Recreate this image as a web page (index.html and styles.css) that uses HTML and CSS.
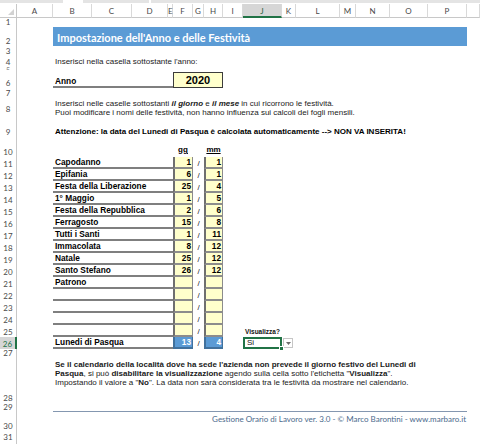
FILE: index.html
```html
<!DOCTYPE html>
<html lang="it">
<head>
<meta charset="utf-8">
<title>Impostazione dell'Anno e delle Festività</title>
<link rel="stylesheet" href="styles.css">
</head>
<body>
<div class="sheet">
  <div class="strip"></div>
  <div class="corner"><svg width="6" height="6" viewBox="0 0 6 6"><polygon points="6,0 6,6 0,6" fill="#d2d2d2"/></svg></div>
  <div class="ch">A</div><div class="ch">B</div><div class="ch">C</div><div class="ch">D</div><div class="ch">E</div><div class="ch">F</div><div class="ch">G</div><div class="ch">H</div><div class="ch">I</div><div class="ch sel">J</div><div class="ch">K</div><div class="ch">L</div><div class="ch">M</div><div class="ch">N</div><div class="ch">O</div><div class="ch">P</div><div class="ch"></div>

  <div class="row"><div class="rh">1</div></div>
  <div class="row"><div class="rh">2</div><div class="title">Impostazione dell'Anno e delle Festività</div></div>
  <div class="row"><div class="rh">3</div></div>
  <div class="row"><div class="rh">4</div><div class="txt">Inserisci nella casella sottostante l'anno:</div></div>
  <div class="row"><div class="rh rh-clip">5</div></div>
  <div class="row"><div class="rh">6</div><div class="name">Anno</div><div class="year">2020</div></div>
  <div class="row"><div class="rh">7</div></div>
  <div class="row"><div class="rh">8</div><div class="para">Inserisci nelle caselle sottostanti <b><i>il giorno</i></b> e <b><i>il mese</i></b> in cui ricorrono le festività.<br>Puoi modificare i nomi delle festività, non hanno influenza sui calcoli dei fogli mensili.</div></div>
  <div class="row"><div class="rh">9</div><div class="txt warn">Attenzione: la data del Lunedi di Pasqua è calcolata automaticamente --&gt; NON VA INSERITA!</div></div>
  <div class="row"><div class="rh">10</div><div class="colh gg-col">gg</div><div class="colh mm-col">mm</div></div>

  <div class="row"><div class="rh">11</div><div class="name">Capodanno</div><div class="num gg">1</div><div class="sl">/</div><div class="num mm">1</div></div>
  <div class="row"><div class="rh">12</div><div class="name">Epifania</div><div class="num gg">6</div><div class="sl">/</div><div class="num mm">1</div></div>
  <div class="row"><div class="rh">13</div><div class="name">Festa della Liberazione</div><div class="num gg">25</div><div class="sl">/</div><div class="num mm">4</div></div>
  <div class="row"><div class="rh">14</div><div class="name">1° Maggio</div><div class="num gg">1</div><div class="sl">/</div><div class="num mm">5</div></div>
  <div class="row"><div class="rh">15</div><div class="name">Festa della Repubblica</div><div class="num gg">2</div><div class="sl">/</div><div class="num mm">6</div></div>
  <div class="row"><div class="rh">16</div><div class="name">Ferragosto</div><div class="num gg">15</div><div class="sl">/</div><div class="num mm">8</div></div>
  <div class="row"><div class="rh">17</div><div class="name">Tutti i Santi</div><div class="num gg">1</div><div class="sl">/</div><div class="num mm">11</div></div>
  <div class="row"><div class="rh">18</div><div class="name">Immacolata</div><div class="num gg">8</div><div class="sl">/</div><div class="num mm">12</div></div>
  <div class="row"><div class="rh">19</div><div class="name">Natale</div><div class="num gg">25</div><div class="sl">/</div><div class="num mm">12</div></div>
  <div class="row"><div class="rh">20</div><div class="name">Santo Stefano</div><div class="num gg">26</div><div class="sl">/</div><div class="num mm">12</div></div>
  <div class="row"><div class="rh">21</div><div class="name">Patrono</div><div class="num gg"></div><div class="sl">/</div><div class="num mm"></div></div>
  <div class="row"><div class="rh">22</div><div class="name"></div><div class="num gg"></div><div class="sl">/</div><div class="num mm"></div></div>
  <div class="row"><div class="rh">23</div><div class="name"></div><div class="num gg"></div><div class="sl">/</div><div class="num mm"></div></div>
  <div class="row"><div class="rh">24</div><div class="name"></div><div class="num gg"></div><div class="sl">/</div><div class="num mm"></div></div>
  <div class="row"><div class="rh">25</div><div class="name"></div><div class="num gg"></div><div class="sl">/</div><div class="num mm"></div><div class="vis">Visualizza?</div></div>
  <div class="row"><div class="rh sel">26</div><div class="name">Lunedi di Pasqua</div><div class="num gg calc">13</div><div class="sl">/</div><div class="num mm calc">4</div><div class="si">Si<span class="handle"></span></div><div class="dd"><svg width="5" height="3" viewBox="0 0 5 3"><polygon points="0,0 5,0 2.5,3" fill="#6b6b6b"/></svg></div></div>
  <div class="row"><div class="rh">27</div></div>
  <div class="row"><div class="rh">28</div><div class="note"><b>Se il calendario della località dove ha sede l'azienda non prevede il giorno festivo del Lunedi di</b><br><b>Pasqua</b>, si può <b>disabilitare la visualizzazione</b> agendo sulla cella sotto l'etichetta "<b>Visualizza</b>".<br>Impostando il valore a "<b>No</b>". La data non sarà considerata tra le festività da mostrare nel calendario.</div></div>
  <div class="row"><div class="rh">29</div><div class="footer"><div class="rule"></div><div class="foot-text">Gestione Orario di Lavoro ver. 3.0 - © Marco Barontini - www.marbaro.it</div></div></div>
  <div class="row"><div class="rh">30</div></div>
  <div class="row"><div class="rh">31</div></div>
  <div class="row"><div class="rh">32</div></div>
</div>
</body>
</html>
```

FILE: styles.css
```css
* { box-sizing: border-box; margin: 0; padding: 0; }
html, body { width: 480px; height: 444px; overflow: hidden; background: #fff; }
body { font-family: "Liberation Sans", Arial, sans-serif; font-size: 8px; color: #111; }

.sheet {
  display: grid;
  width: 480px;
  grid-template-columns: 17px 36px 39px 40px 36px 5px 20px 11px 19px 20px 39px 14px 44px 16px 34px 38px 39px 13px;
  grid-template-rows: 4px 14px 9px 19px 10px 11px 3px 18px 10px 16px 23px 20px repeat(15, 12px) 12px 9px 45px 9px 19px 11px 11px;
}
.row { display: contents; }

.strip {
  grid-column: 1 / -1;
  height: 3px;
  background: linear-gradient(to right, #e4e4e4 0 63px, #fff 63px 83px, #e4e4e4 83px 149px, #fff 149px 151px, #e4e4e4 151px);
}
.corner {
  grid-column: 1;
  border-right: 1px solid #c8c8c8;
  border-bottom: 1px solid #c8c8c8;
  display: flex; align-items: flex-end; justify-content: flex-end;
  padding: 0 2px 2px 0;
}
.ch {
  font-family: "Lato", "Liberation Sans", sans-serif;
  font-size: 8px; color: #4a4a4a;
  text-align: center; line-height: 13px; padding-top: 1px;
  border-right: 1px solid #d9d9d9;
  border-bottom: 1px solid #c8c8c8;
}
.ch.sel { background: #d6d6d6; color: #1e5e38; border-bottom: 2px solid #217346; }

.rh {
  grid-column: 1;
  font-family: "Lato", "Liberation Sans", sans-serif;
  font-size: 8px; color: #4a4a4a;
  text-align: center; line-height: 10px;
  border-right: 1px solid #c8c8c8;
  overflow: hidden;
  display: flex; align-items: flex-end; justify-content: center;
}
.rh.rh-clip { align-items: flex-start; line-height: 7px; font-size: 7px; color: #8a8a8a; }
.rh.sel { background: #d6d6d6; color: #217346; border-right: 2px solid #217346; }

.title {
  grid-column: 3 / 18;
  background: #5b9bd5;
  color: #fff;
  font-family: "Lato", "Liberation Sans", sans-serif;
  font-weight: 700; font-size: 11px;
  display: flex; align-items: center;
  padding-left: 4px; padding-top: 1px;
}

.txt, .para, .note {
  grid-column: 3 / 18;
  white-space: nowrap;
  padding-left: 2px;
  color: #1a1a1a;
}
.txt { display: flex; align-items: flex-end; line-height: 10px; }
.warn { font-weight: 700; color: #000; }
.para { align-self: start; line-height: 9px; padding-top: 1px; }
.note { align-self: start; line-height: 9px; padding-top: 2px; }

.name {
  grid-column: 3 / 7;
  border-bottom: 2px solid #7f7f7f;
  font-weight: 700; font-size: 8.3px; color: #000;
  display: flex; align-items: flex-end;
  line-height: 10px; padding-left: 2px;
  white-space: nowrap;
}
.year {
  grid-column: 7 / 10;
  margin-top: 2px;
  background: #ffffcc;
  border: 1px solid #3c3c3c;
  font-weight: 700; font-size: 11px; color: #000;
  display: flex; align-items: center; justify-content: center;
}

.colh {
  font-weight: 700; text-decoration: underline; color: #000;
  text-align: center; line-height: 10px;
  align-self: end; padding-bottom: 2px;
}
.gg-col { grid-column: 7; }
.mm-col { grid-column: 9; }

.num {
  background: #ffffcc;
  border-left: 2px solid #6f6f6f;
  border-right: 1px solid #8c8c8c;
  border-bottom: 2px solid #8c8c8c;
  font-weight: 700; font-size: 8.3px; color: #000;
  display: flex; align-items: flex-end; justify-content: flex-end;
  line-height: 10px; padding-right: 1px;
}
.gg { grid-column: 7; }
.mm { grid-column: 9; }
.num.calc { background: #5b9bd5; color: #fff; border-color: #41719c; }
.sl { grid-column: 8; text-align: center; line-height: 10px; align-self: end; color: #222; }

.vis {
  grid-column: 11 / 13;
  font-weight: 700; font-size: 6.5px; color: #111;
  align-self: end; line-height: 9px; padding-left: 2px; padding-bottom: 1px;
  white-space: nowrap;
}
.si {
  grid-column: 11;
  position: relative;
  border: 2px solid #217346;
  display: flex; align-items: center;
  padding-left: 2px; color: #111;
  line-height: 8px;
}
.handle {
  position: absolute; right: -4px; bottom: -4px;
  width: 5px; height: 5px; background: #217346; border: 1px solid #fff;
}
.dd {
  grid-column: 12;
  margin: 1px 3px 1px 1px;
  border: 1px solid #c6c6c6;
  background: #fff;
  display: flex; align-items: center; justify-content: center;
}

.footer {
  grid-column: 2 / -1;
  grid-row: span 2;
  padding: 0 13px 0 36px;
  display: flex; flex-direction: column;
}
.rule { height: 9px; border-bottom: 1px solid #8497b0; margin-bottom: 1px; flex: none; }
.foot-text {
  font-family: "Lato", "Liberation Sans", sans-serif;
  font-size: 8px; color: #4b6a8c;
  line-height: 10px;
  text-align: right;
  padding-top: 1px; padding-right: 1px;
  white-space: nowrap;
}
```
